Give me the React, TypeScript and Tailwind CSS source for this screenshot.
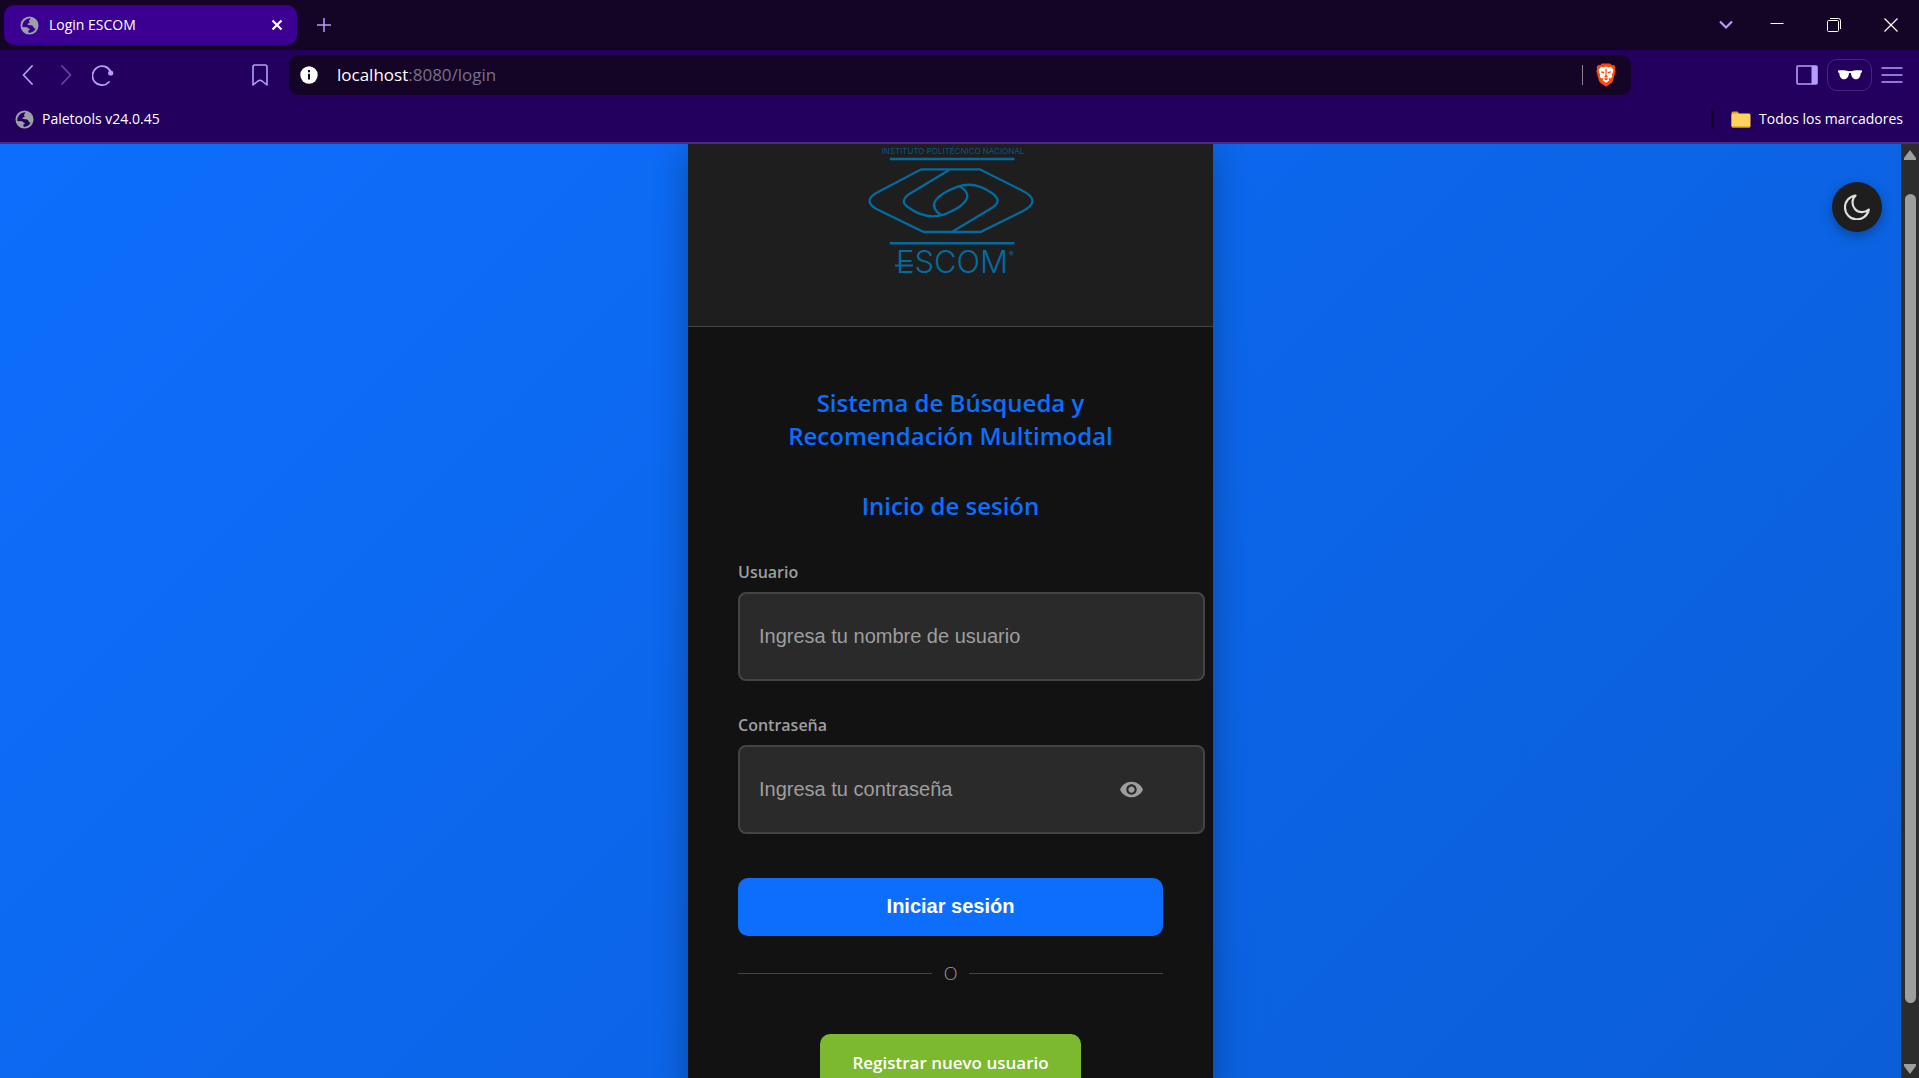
import { useState } from "react";
import { MdVisibility } from "react-icons/md";

const ui = "font-['Open_Sans','Noto_Sans',sans-serif]";

function Globe({ sea }: { sea: string }) {
  return (
    <svg viewBox="0 0 20 20" className="size-[19px] shrink-0" fill="none" aria-hidden="true">
      <circle cx="10" cy="10" r="9.500" fill="#9aa0a6" />
      <path d="M11 2.300C5.500 2.500 2 7 2.500 11.500C3.500 11.800 5.500 11.800 7 11.800C8.500 11.800 8.500 13.500 9.800 13.500C10.800 13.500 10.500 15 9 15.200C8 15.500 8.500 17.500 9.500 17.800C12.500 17.800 15 16 16.500 13.500C15 13.500 14.500 12 13.500 10.500C12.500 9 10.500 10 9 9.500C7.500 9 7.500 7.800 9 7.500C10.500 7.300 10.500 6.500 9.500 5.800C8.800 5 10.800 4 11 2.300z" fill={sea} />
      <path d="M2.500 12C3.500 15.500 6 17.500 9 17.800L8.500 15.500L7 12z" fill="#9aa0a6" />
    </svg>
  );
}

function BraveLion() {
  return (
    <svg viewBox="0 0 20 24" className="h-6 w-5" aria-hidden="true">
      <path d="M6 0.500h8l1.800 1.800 2-0.300 1.700 2.300-0.600 1.700 0.700 2.200-2.600 9.600q-0.400 1.300-1.600 2.200L10 23.700l-5.400-3.700q-1.200-0.900-1.600-2.200L0.400 8.200 1.100 6 0.500 4.300 2.200 2l2 0.300z" fill="#fb4a0c" />
      <path d="M5 3.800L7.500 4.300 10 3.600 12.500 4.300 15 3.800 17.500 7 16.800 9.500 15.800 12 16.300 13.800 14.500 15.500 12.800 14.800 13.200 17.500 10 19.800 6.800 17.500 7.200 14.800 5.500 15.500 3.700 13.800 4.200 12 3.200 9.500 2.500 7z" fill="#fff" />
      <path d="M5 8.300L8.500 9 8 10.500 5.500 9.800zM15 8.300L11.500 9 12 10.500 14.500 9.800zM9.300 6h1.400l-0.200 6 1.500 1.200L10 14.800 8 13.200 9.500 12zM7.500 16L10 14.800l2.500 1.200L10 17.200z" fill="#fb4a0c" />
    </svg>
  );
}

function TabStrip() {
  return (
    <div className="flex h-[50px] items-center bg-[#140426] pl-1 text-[#b79cff]">
      <div className="flex h-10 w-[293px] items-center rounded-[10px] bg-[#3b0092] pl-4 pr-2.5 text-white">
        <Globe sea="#3b0092" />
        <span className="ml-2.5 flex-1 text-sm">Login ESCOM</span>
        <button aria-label="Cerrar pestaña" className="p-1">
          <svg viewBox="0 0 12 12" className="size-3" stroke="currentColor" strokeWidth="2.200" fill="none"><path d="M1.500 1.500l9 9M10.500 1.500l-9 9" /></svg>
        </button>
      </div>
      <button aria-label="Nueva pestaña" className="ml-5">
        <svg viewBox="0 0 14 14" className="size-3.5" stroke="currentColor" strokeWidth="1.500" fill="none"><path d="M7 0v14M0 7h14" /></svg>
      </button>
      <div className="ml-auto flex items-center gap-[43px] pr-[21px] text-white">
        <button aria-label="Buscar pestañas" className="-mr-1.5 text-[#b79cff]">
          <svg viewBox="0 0 14 10" className="h-2.5 w-3.5" stroke="currentColor" strokeWidth="2.200" fill="none"><path d="M1 1.500l6 6 6-6" /></svg>
        </button>
        <button aria-label="Minimizar">
          <svg viewBox="0 0 14 14" className="size-3.5" stroke="currentColor" fill="none"><path d="M0.500 5.500h13" /></svg>
        </button>
        <button aria-label="Restaurar">
          <svg viewBox="0 0 14 14" className="size-3.5" stroke="currentColor" fill="none"><rect x="0.500" y="2.500" width="11" height="11" rx="1" /><path d="M3 0.500h8.500a2 2 0 0 1 2 2V11" /></svg>
        </button>
        <button aria-label="Cerrar">
          <svg viewBox="0 0 14 14" className="size-3.5" stroke="currentColor" strokeWidth="1.200" fill="none"><path d="M0.500 0.500l13 13M13.500 0.500l-13 13" /></svg>
        </button>
      </div>
    </div>
  );
}

function Toolbar() {
  return (
    <div className="flex h-[50px] items-center pl-[22px] pr-4 text-[#b79cff]">
      <button aria-label="Atrás">
        <svg viewBox="0 0 12 20" className="h-5 w-3" stroke="currentColor" strokeWidth="1.800" fill="none" strokeLinecap="round" strokeLinejoin="round"><path d="M10 1L1.500 10l8.500 9" /></svg>
      </button>
      <button aria-label="Adelante" className="ml-[26px] text-[#6a3fae]">
        <svg viewBox="0 0 12 20" className="h-5 w-3" stroke="currentColor" strokeWidth="1.800" fill="none" strokeLinecap="round" strokeLinejoin="round"><path d="M2 1l8.500 9L2 19" /></svg>
      </button>
      <button aria-label="Recargar" className="ml-5">
        <svg viewBox="0 0 22 22" className="size-[22px]" stroke="currentColor" strokeWidth="1.800" fill="none" strokeLinecap="round"><path d="M17 18A9.500 9.500 0 1 1 18.500 7.500" /><circle cx="18.700" cy="9" r="2.600" fill="currentColor" stroke="none" /></svg>
      </button>
      <button aria-label="Añadir marcador" className="ml-[138px]">
        <svg viewBox="0 0 16 22" className="h-[22px] w-4" stroke="currentColor" strokeWidth="1.600" fill="none" strokeLinejoin="round"><path d="M1 3a2 2 0 0 1 2-2h10a2 2 0 0 1 2 2v18l-5-4q-2-1.400-4 0l-5 4z" /></svg>
      </button>
      <div className="ml-[21px] flex h-10 flex-1 items-center rounded-[10px] bg-[#140426] pl-[11px] pr-[15px]">
        <svg viewBox="0 0 18 18" className="size-[18px]" aria-hidden="true"><circle cx="9" cy="9" r="8.700" fill="#fff" /><path d="M9 4v2.200M9 7.800V13.500" stroke="#140426" strokeWidth="2" /></svg>
        <div role="textbox" aria-label="Dirección" tabIndex={0} className="ml-[19px] flex-1 text-[17px] text-[#77708a]"><span className="text-white">localhost</span>:8080/login</div>
        <span className="h-5 w-px bg-[#8a8396]" />
        <button aria-label="Brave Shields" className="ml-[13px]"><BraveLion /></button>
      </div>
      <div className="flex items-center pl-[165px]">
        <button aria-label="Panel lateral">
          <svg viewBox="0 0 22 20" className="h-5 w-[22px]" fill="none"><rect x="1" y="1" width="20" height="18" rx="1" stroke="currentColor" strokeWidth="1.600" /><path d="M15.500 1H21v18h-5.500z" fill="currentColor" /></svg>
        </button>
        <button aria-label="Ventana privada" className="ml-[9px] grid h-8 w-[45px] place-items-center rounded-[10px] border border-[#44267a]">
          <svg viewBox="0 0 24 10" className="h-2.5 w-6" fill="#fff"><path d="M0 0.500C4 0 8 0.200 10.500 1.200Q12 0.600 13.500 1.200C16 0.200 20 0 24 0.500V2.300L22.800 3C22.500 6.500 21 9.300 18 9.300C15 9.300 13.300 6.500 13 3.200Q12 2.400 11 3.200C10.700 6.500 9 9.300 6 9.300C3 9.300 1.500 6.500 1.200 3L0 2.300z" /></svg>
        </button>
        <button aria-label="Menú" className="ml-[9px]">
          <svg viewBox="0 0 22 16" className="h-4 w-[22px]" stroke="currentColor" strokeWidth="1.600"><path d="M0.500 1h21M0.500 8h21M0.500 15h21" /></svg>
        </button>
      </div>
    </div>
  );
}

function Bookmarks() {
  return (
    <div className="flex h-[42px] items-center pb-1 pl-[15px] pr-4 text-sm text-white">
      <a href="#paletools" className="flex items-center gap-2"><Globe sea="#23005e" />Paletools v24.0.45</a>
      <span className="ml-auto mr-[17px] h-5 w-[3px] rounded bg-[#140426]" />
      <button className="flex items-center gap-2">
        <svg viewBox="0 0 20 17" className="h-[17px] w-5" aria-hidden="true"><path d="M0.500 2Q0.500 0.500 2 0.500h4.500L8.500 3H18v12H0.500z" fill="#dca51a" /><rect x="0.500" y="2.500" width="19" height="14" rx="1.500" fill="#ffd45e" /><path d="M1 15.800h18" stroke="#dca51a" /></svg>
        Todos los marcadores
      </button>
    </div>
  );
}

function Logo() {
  return (
    <svg viewBox="0 0 168 134" className="h-[134px] w-[168px]" fill="none" stroke="#046b9f" strokeWidth="2.300" role="img" aria-label="Instituto Politécnico Nacional ESCOM">
      <text x="86" y="9.500" textAnchor="middle" fontSize="8" fontFamily="Inter" fill="#046b9f" fillOpacity="0.75" stroke="none">INSTITUTO POLITÉCNICO NACIONAL</text>
      <path d="M22.800 15H147.500M22.800 99.300H147.500" strokeWidth="2.600" />
      <path d="M54.200 25.300H112.800L155 46.500Q176 57 155 67.500L113.500 88H56.800L13 66.800Q-8 57 13 47z" />
      <path d="M82.200 26L43.500 49.300Q31 57 41.800 63.700C52 71 64 74.500 76.800 70.700C86 67 95 62 98.500 57C102.500 51 99.500 46 91.800 42" />
      <path d="M85.200 87.700L125.200 63.700Q136 57 125.200 49.300C115 42 104 38 90.800 42.700C82 46 72 51 68.500 56.500C65 62 68 67.500 74.200 71" />
      <text x="85" y="128.500" textAnchor="middle" fontSize="31" fontWeight="300" fontFamily="Inter" fill="#046b9f" stroke="none">ESCOM</text>
      <path d="M28 121.500H46" strokeWidth="2" />
      <text x="142" y="113" fontSize="7" fontFamily="Inter" fill="#046b9f" stroke="none">®</text>
    </svg>
  );
}

const field =
  "block h-[89px] w-[calc(100%+42px)] rounded-lg border-2 border-[#444] bg-[#2a2a2a] px-[19px] font-['Liberation_Sans',Arial,sans-serif] text-xl text-[#e0e0e0] placeholder:text-[#9e9e9e]";
const labelText = "mb-2 block text-base leading-6 font-semibold text-[#9e9e9e]";
const heading = "text-center text-2xl leading-[33px] font-semibold text-[#0d6efd]";

function LoginCard() {
  const [shown, setShown] = useState(false);
  return (
    <section className="w-[525px] shrink-0 bg-[#121212] shadow-[0_8px_32px_rgba(0,0,0,0.3)]">
      <header className="flex h-[183px] justify-center border-b border-[#444] bg-[#1e1e1e]"><Logo /></header>
      <form className="px-[50px] pt-[59px]" onSubmit={(e) => e.preventDefault()}>
        <h1 className={heading}>Sistema de Búsqueda y<br />Recomendación Multimodal</h1>
        <h2 className={heading + " mt-[37px]"}>Inicio de sesión</h2>
        <label htmlFor="user" className={labelText + " mt-[38px]"}>Usuario</label>
        <input id="user" placeholder="Ingresa tu nombre de usuario" className={field} />
        <label htmlFor="pass" className={labelText + " mt-8"}>Contraseña</label>
        <div className="relative">
          <input id="pass" type={shown ? "text" : "password"} placeholder="Ingresa tu contraseña" className={field} />
          <button type="button" aria-label="Mostrar contraseña" onClick={() => setShown(!shown)} className="absolute top-8 right-[19px] text-[#9e9e9e]"><MdVisibility className="size-[25px]" /></button>
        </div>
        <button className="mt-11 h-[58px] w-full rounded-[10px] bg-[#0d6efd] pb-0.5 font-['Liberation_Sans',Arial,sans-serif] text-xl font-bold text-white">Iniciar sesión</button>
        <div className="mt-6 flex h-[26px] items-center gap-3 text-lg font-light text-[#9e9e9e]">
          <span className="h-px flex-1 bg-[#444]" />O<span className="h-px flex-1 bg-[#444]" />
        </div>
        <a href="#registro" className="mx-auto mt-12 flex h-[58px] w-fit items-center rounded-[10px] bg-[#7cb92f] px-8 text-[17px] font-semibold text-white">Registrar nuevo usuario</a>
      </form>
    </section>
  );
}

export default function App() {
  return (
    <div className={"flex h-screen flex-col overflow-hidden " + ui}>
      <div className="shrink-0 border-b-2 border-[#4a2a85] bg-[#23005e]">
        <TabStrip />
        <Toolbar />
        <Bookmarks />
      </div>
      <div className="flex min-h-0 flex-1">
        <main className="relative flex flex-1 items-start justify-center overflow-hidden bg-linear-135 from-[#0d6efd] to-[#0b5ed7]">
          <LoginCard />
          <button aria-label="Cambiar tema" className="absolute top-[38px] right-[19px] grid size-[50px] place-items-center rounded-full bg-[#1e1e1e] text-[#e0e0e0] shadow-[0_4px_12px_rgba(0,0,0,0.3)]">
            <svg viewBox="0 0 26 26" className="size-[26px]" fill="none" stroke="currentColor" strokeWidth="2.200" strokeLinejoin="round"><path d="M11.500 1.500A12 12 0 1 0 24.800 15.500A9.500 9.500 0 0 1 11.500 1.500z" /></svg>
          </button>
        </main>
        <div className="flex w-[18px] flex-col items-center bg-[#2c2c2c] pt-1.5 pb-1 text-[#9e9e9e]" aria-hidden="true">
          <svg viewBox="0 0 12 10" className="h-2.5 w-3" fill="currentColor"><path d="M6 0L12 8v2H0V8z" /></svg>
          <div className="mt-[34px] mb-[61px] w-[11px] flex-1 rounded-full bg-[#9e9e9e]" />
          <svg viewBox="0 0 12 10" className="h-2.5 w-3" fill="currentColor"><path d="M6 10L12 2V0H0v2z" /></svg>
        </div>
      </div>
    </div>
  );
}
